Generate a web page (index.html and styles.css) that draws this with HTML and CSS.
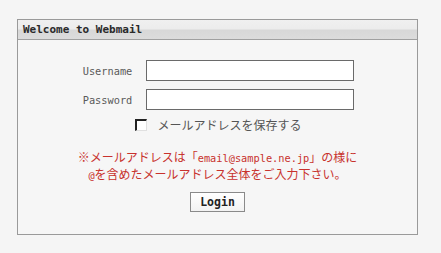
FILE: index.html
```html
<!DOCTYPE html>
<html lang="ja">
<head>
<meta charset="utf-8">
<title>Webmail</title>
<link rel="stylesheet" href="styles.css">
</head>
<body>
<div class="panel">
  <div class="header">Welcome to Webmail</div>
  <div class="content">
    <div class="fields">
      <label class="label">Username</label>
      <span class="input"></span>
      <label class="label">Password</label>
      <span class="input"></span>
    </div>
    <div class="remember">
      <span class="check"></span>
      <span class="remember-text">メールアドレスを保存する</span>
    </div>
    <p class="note">※メールアドレスは「<span class="mono">email@sample.ne.jp</span>」の様に<br><span class="mono">@</span>を含めたメールアドレス全体をご入力下さい。</p>
    <span class="button">Login</span>
  </div>
</div>
</body>
</html>
```
FILE: styles.css
```css
html, body {
  margin: 0;
  padding: 0;
  background: #f5f5f5;
}
body {
  font-family: "Noto Sans CJK JP", "DejaVu Sans", sans-serif;
}
.panel {
  margin: 19px 0 0 17px;
  width: 401px;
  height: 216px;
  box-sizing: border-box;
  border: 1px solid #9a9a9a;
  background: #f6f6f6;
}
.header {
  height: 20px;
  box-sizing: border-box;
  border-bottom: 1px solid #a0a0a0;
  background: linear-gradient(#f0f0f0 0%, #ececec 45%, #d8d8d8 55%, #dcdcdc 100%);
  font-family: "DejaVu Sans Mono", monospace;
  font-weight: bold;
  font-size: 11px;
  line-height: 19px;
  padding-left: 5px;
  color: #2a2a2a;
}
.content {
  display: flex;
  flex-direction: column;
  align-items: center;
  padding-top: 20px;
}
.fields {
  display: grid;
  grid-template-columns: auto 208px;
  column-gap: 14px;
  row-gap: 8px;
  align-items: center;
  margin-left: 2px;
}
.label {
  font-family: "DejaVu Sans Mono", monospace;
  font-size: 10.3px;
  color: #5a5a5a;
  text-align: right;
}
.input {
  display: block;
  height: 21px;
  box-sizing: border-box;
  border: 1px solid #6a6a6a;
  background: #fff;
}
.remember {
  display: flex;
  align-items: center;
  margin-top: 8px;
  margin-left: 2px;
  height: 14px;
}
.check {
  width: 12px;
  height: 12px;
  box-sizing: border-box;
  border-top: 2px solid #222;
  border-left: 2px solid #222;
  border-right: 1px solid #e0e0e0;
  border-bottom: 1px solid #e0e0e0;
  background: #fff;
  margin-right: 10px;
}
.remember-text {
  font-size: 12px;
  color: #555;
  line-height: 14px;
}
.note {
  margin: 17px 0 0;
  color: #c8322d;
  font-size: 12px;
  line-height: 16px;
  text-align: center;
}
.mono {
  font-family: "DejaVu Sans Mono", monospace;
  font-size: 10.3px;
}
.button {
  margin-top: 9px;
  display: block;
  width: 55px;
  height: 20px;
  box-sizing: border-box;
  border: 1px solid #8a8a8a;
  background: linear-gradient(#ffffff, #f2f2f2);
  font-family: "DejaVu Sans Mono", monospace;
  font-weight: bold;
  font-size: 11.5px;
  line-height: 18px;
  text-align: center;
  color: #222;
}
```
